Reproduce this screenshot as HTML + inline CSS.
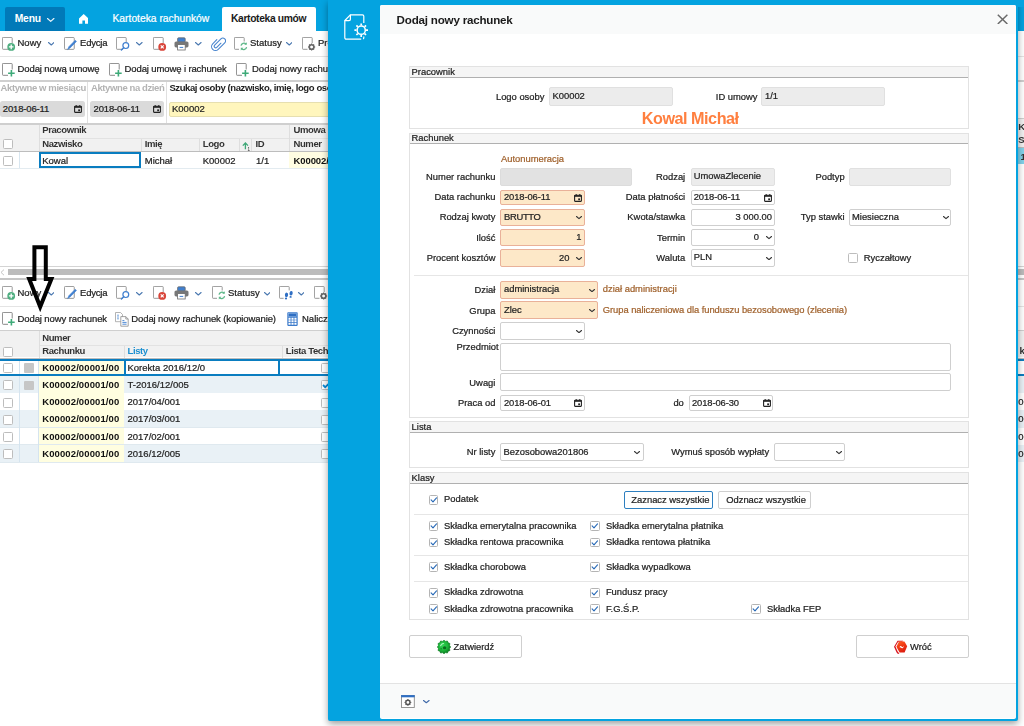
<!DOCTYPE html>
<html lang="pl"><head><meta charset="utf-8"><title>Dodaj nowy rachunek</title>
<style>
html,body{margin:0;padding:0;background:#fff;}
body{width:1024px;height:726px;position:relative;overflow:hidden;font-family:"Liberation Sans",sans-serif;}
.b{position:absolute;display:block;}
.t{position:absolute;white-space:nowrap;line-height:14px;-webkit-text-stroke:.22px currentColor;opacity:.999;}
#root{position:absolute;left:0;top:0;width:1024px;height:726px;overflow:hidden;opacity:.999;}
</style></head><body><div id="root">
<div class="b" style="left:0;top:0;width:1024px;height:31px;background:#04a3e0"></div>
<div class="b" style="left:4.5px;top:7px;width:60.5px;height:24px;background:#0079b8;border-radius:2px 2px 0 0;"></div>
<div class="t " style="left:14.7px;top:11.73px;font-size:10.3px;color:#fff;font-weight:700;-webkit-text-stroke:0;letter-spacing:-0.15px;">Menu</div>
<svg class="b" style="left:47.2px;top:17.6px" width="7.4" height="4.4" viewBox="0 0 7.4 4.4"><path d="M.5 .5L3.7 3.4L6.9 .5" fill="none" stroke="#e8f4fb" stroke-width="1.2" stroke-linecap="round" stroke-linejoin="round"/></svg>
<svg class="b" style="left:79px;top:14px" width="9.4" height="10" viewBox="0 0 9.4 10"><path d="M4.7 0L0 4.4V9.8H3.4V6.4H6V9.8H9.4V4.4z" fill="#fff"/></svg>
<div class="t " style="left:112.5px;top:11.73px;font-size:10.3px;color:#fff;">Kartoteka rachunków</div>
<div class="b" style="left:221.5px;top:7px;width:94.5px;height:24px;background:#fff;border-radius:2px 2px 0 0;"></div>
<div class="t " style="left:231px;top:11.73px;font-size:10.3px;color:#1a1a1a;font-weight:700;-webkit-text-stroke:0;letter-spacing:-0.36px;">Kartoteka umów</div>
<svg class="b" style="left:1.5px;top:37px" width="15" height="14" viewBox="0 0 15 14"><path d="M7 12.3H1.2a.8.8 0 0 1-.8-.8V1.2a.8.8 0 0 1 .8-.8h8.2a.8.8 0 0 1 .8.8V6" fill="#fff" stroke="#8c8c8c" stroke-width=".9"/><circle cx="9.2" cy="9.9" r="3.9" fill="#4fae80"/><path d="M9.2 7.6v4.6M6.9 9.9h4.6" stroke="#fff" stroke-width="1.3"/></svg>
<div class="t " style="left:17.5px;top:36.31px;font-size:9.5px;color:#222;">Nowy</div>
<svg class="b" style="left:47.8px;top:42.2px" width="6.6" height="4" viewBox="0 0 6.6 4"><path d="M.5 .5L3.3 3L6.1 .5" fill="none" stroke="#4a78b0" stroke-width="1.1" stroke-linecap="round" stroke-linejoin="round"/></svg>
<svg class="b" style="left:64px;top:37px" width="15" height="14" viewBox="0 0 15 14"><rect x=".45" y=".45" width="9.8" height="11.9" rx=".9" fill="#fff" stroke="#8c8c8c" stroke-width=".9"/><path d="M3.6 12.6l1.2-2.9L11.2 3.2l1.3 1.2L6.1 11z" fill="#3f7fcf" stroke="#3f7fcf" stroke-width=".5" stroke-linejoin="round"/></svg>
<div class="t " style="left:80px;top:36.31px;font-size:9.5px;color:#222;letter-spacing:-0.2px;">Edycja</div>
<svg class="b" style="left:116.2px;top:37px" width="15" height="14" viewBox="0 0 15 14"><path d="M7 12.3H1.2a.8.8 0 0 1-.8-.8V1.2a.8.8 0 0 1 .8-.8h8.2a.8.8 0 0 1 .8.8V5" fill="#fff" stroke="#8c8c8c" stroke-width=".9"/><circle cx="9.8" cy="8.6" r="2.9" fill="#fff" stroke="#3f7fcf" stroke-width="1.2"/><path d="M7.7 10.7L5.4 13" stroke="#3f7fcf" stroke-width="1.4" stroke-linecap="round"/></svg>
<svg class="b" style="left:136.2px;top:42.2px" width="6.6" height="4" viewBox="0 0 6.6 4"><path d="M.5 .5L3.3 3L6.1 .5" fill="none" stroke="#4a78b0" stroke-width="1.1" stroke-linecap="round" stroke-linejoin="round"/></svg>
<svg class="b" style="left:153px;top:37px" width="15" height="14" viewBox="0 0 15 14"><path d="M7 12.3H1.2a.8.8 0 0 1-.8-.8V1.2a.8.8 0 0 1 .8-.8h8.2a.8.8 0 0 1 .8.8V6" fill="#fff" stroke="#8c8c8c" stroke-width=".9"/><circle cx="9.2" cy="9.9" r="3.9" fill="#d8453a"/><path d="M7.7 8.4l3 3M10.7 8.4l-3 3" stroke="#fff" stroke-width="1.2"/></svg>
<svg class="b" style="left:173.6px;top:36.6px" width="15" height="14" viewBox="0 0 15 14"><rect x="3.6" y=".8" width="7.6" height="4.4" rx="1" fill="#3f7fcf" stroke="#6c6c6c" stroke-width=".8"/><rect x=".5" y="4.4" width="14" height="6" rx="1.6" fill="#777"/><rect x="3.6" y="7.6" width="7.6" height="5.4" fill="#fff" stroke="#6c6c6c" stroke-width=".8"/><path d="M5.6 10.4h3.6" stroke="#3f7fcf" stroke-width="1"/></svg>
<svg class="b" style="left:195.2px;top:42.2px" width="6.6" height="4" viewBox="0 0 6.6 4"><path d="M.5 .5L3.3 3L6.1 .5" fill="none" stroke="#4a78b0" stroke-width="1.1" stroke-linecap="round" stroke-linejoin="round"/></svg>
<svg class="b" style="left:210.5px;top:35.7px" width="15" height="15" viewBox="0 0 15 15"><g transform="rotate(45 7.5 7.5)"><path d="M8.6 6V11.8a1.5 1.5 0 0 1-3 0V3a2.7 2.7 0 0 1 5.400 0V12.200a3.900 3.900 0 0 1-7.800 0V6.400" fill="none" stroke="#4a86cf" stroke-width="1.1" stroke-linecap="round" transform="translate(.4,-.4)"/></g></svg>
<svg class="b" style="left:234px;top:37px" width="15" height="14" viewBox="0 0 15 14"><path d="M5 12.3H1.2a.8.8 0 0 1-.8-.8V1.2a.8.8 0 0 1 .8-.8h8.2a.8.8 0 0 1 .8.8V4.5" fill="#fff" stroke="#8c8c8c" stroke-width=".9"/><path d="M7 8.6a3 3 0 0 1 5-1.6M12.6 10.2a3 3 0 0 1-5 1.6" fill="none" stroke="#5fb88a" stroke-width="1.3"/><path d="M12.8 5.2v2.6h-2.6zM6.8 13.4v-2.6h2.6z" fill="#5fb88a"/></svg>
<div class="t " style="left:250px;top:36.31px;font-size:9.5px;color:#222;">Statusy</div>
<svg class="b" style="left:285.6px;top:42.2px" width="6.6" height="4" viewBox="0 0 6.6 4"><path d="M.5 .5L3.3 3L6.1 .5" fill="none" stroke="#4a78b0" stroke-width="1.1" stroke-linecap="round" stroke-linejoin="round"/></svg>
<svg class="b" style="left:302px;top:37px" width="15" height="14" viewBox="0 0 15 14"><path d="M5.5 12.3H1.2a.8.8 0 0 1-.8-.8V1.2a.8.8 0 0 1 .8-.8h8.2a.8.8 0 0 1 .8.8V6" fill="#fff" stroke="#8c8c8c" stroke-width=".9"/><circle cx="9.6" cy="10" r="2.3" fill="none" stroke="#666" stroke-width="1.6"/><path d="M9.6 6.4v1.2M9.6 12.4v1.2M6 10h1.2M12 10h1.2M7.1 7.5l.9.9M11.2 11.6l.9.9M12.1 7.5l-.9.9M8 11.6l-.9.9" stroke="#666" stroke-width="1.2"/></svg>
<div class="t " style="left:318px;top:36.31px;font-size:9.5px;color:#222;">Projekt</div>
<div class="b" style="left:0px;top:56px;width:330px;height:1px;background:#e4e4e4"></div>
<svg class="b" style="left:1.5px;top:62.5px" width="15" height="14" viewBox="0 0 15 14"><path d="M6 12.3H1.2a.8.8 0 0 1-.8-.8V1.2a.8.8 0 0 1 .8-.8h8.2a.8.8 0 0 1 .8.8V6.5" fill="#fff" stroke="#7a7a7a" stroke-width=".9"/><path d="M9.4 6.9v6.6M6.1 10.2h6.6" stroke="#3daa78" stroke-width="1.6"/></svg>
<div class="t " style="left:17.5px;top:62.21px;font-size:9.5px;color:#222;letter-spacing:-0.1px;">Dodaj nową umowę</div>
<svg class="b" style="left:108.5px;top:62.5px" width="15" height="14" viewBox="0 0 15 14"><path d="M6 12.3H1.2a.8.8 0 0 1-.8-.8V1.2a.8.8 0 0 1 .8-.8h8.2a.8.8 0 0 1 .8.8V6.5" fill="#fff" stroke="#7a7a7a" stroke-width=".9"/><path d="M9.4 6.9v6.6M6.1 10.2h6.6" stroke="#3daa78" stroke-width="1.6"/></svg>
<div class="t " style="left:124.6px;top:62.21px;font-size:9.5px;color:#222;letter-spacing:-0.12px;">Dodaj umowę i rachunek</div>
<svg class="b" style="left:236px;top:62.5px" width="15" height="14" viewBox="0 0 15 14"><path d="M6 12.3H1.2a.8.8 0 0 1-.8-.8V1.2a.8.8 0 0 1 .8-.8h8.2a.8.8 0 0 1 .8.8V6.5" fill="#fff" stroke="#7a7a7a" stroke-width=".9"/><path d="M9.4 6.9v6.6M6.1 10.2h6.6" stroke="#3daa78" stroke-width="1.6"/></svg>
<div class="t " style="left:252px;top:62.21px;font-size:9.5px;color:#222;">Dodaj nowy rachunek</div>
<div class="b" style="left:0px;top:80px;width:330px;height:2px;background:#cfcfcf"></div>
<div class="t " style="left:0.6px;top:80.81px;font-size:9.5px;color:#b3b3b3;font-weight:700;-webkit-text-stroke:0;letter-spacing:-0.4px;">Aktywne w miesiącu</div>
<div class="t " style="left:91px;top:80.81px;font-size:9.5px;color:#b3b3b3;font-weight:700;-webkit-text-stroke:0;letter-spacing:-0.4px;">Aktywne na dzień</div>
<div class="t " style="left:169.4px;top:80.81px;font-size:9.5px;color:#222;font-weight:700;-webkit-text-stroke:0;letter-spacing:-0.4px;">Szukaj osoby (nazwisko, imię, logo osoby)</div>
<div class="b" style="left:87.3px;top:82px;width:1px;height:41.5px;background:#e0e0e0"></div>
<div class="b" style="left:166px;top:82px;width:1px;height:41.5px;background:#e0e0e0"></div>
<div class="b" style="left:0px;top:101px;width:85.4px;height:15.7px;background:#dadada;border-radius:2.5px;"></div>
<div class="t " style="left:2.75px;top:102.11px;font-size:9.5px;color:#222;letter-spacing:-0.15px;">2018-06-11</div>
<svg class="b" style="left:74.4px;top:105px" width="8" height="8" viewBox="0 0 8 8"><rect x=".6" y="1.2" width="6.8" height="6.2" rx=".6" fill="none" stroke="#222" stroke-width="1.1"/><rect x=".6" y="1.2" width="6.8" height="1.6" fill="#222"/><path d="M2.2 0v1.6M5.8 0v1.6" stroke="#222" stroke-width="1"/><rect x="4.2" y="4.4" width="1.8" height="1.8" fill="#222"/></svg>
<div class="b" style="left:90.3px;top:101px;width:73.4px;height:15.7px;background:#dadada;border-radius:2.5px;"></div>
<div class="t " style="left:93.5px;top:102.11px;font-size:9.5px;color:#222;letter-spacing:-0.15px;">2018-06-11</div>
<svg class="b" style="left:153px;top:105px" width="8" height="8" viewBox="0 0 8 8"><rect x=".6" y="1.2" width="6.8" height="6.2" rx=".6" fill="none" stroke="#222" stroke-width="1.1"/><rect x=".6" y="1.2" width="6.8" height="1.6" fill="#222"/><path d="M2.2 0v1.6M5.8 0v1.6" stroke="#222" stroke-width="1"/><rect x="4.2" y="4.4" width="1.8" height="1.8" fill="#222"/></svg>
<div class="b" style="left:168.5px;top:101.5px;width:170px;height:15px;background:#fff6bd;border-radius:2px;border:1px solid #e6dfb0;box-sizing:border-box"></div>
<div class="t " style="left:172px;top:102.11px;font-size:9.5px;color:#222;">K00002</div>
<div class="b" style="left:0px;top:123px;width:330px;height:2px;background:#cfcfcf"></div>
<div class="b" style="left:0px;top:125px;width:330px;height:26px;background:#f1f1f1"></div>
<div class="b" style="left:38.7px;top:138px;width:250.7px;height:1px;background:#e2e2e2"></div>
<div class="b" style="left:289.4px;top:138px;width:45px;height:1px;background:#e2e2e2"></div>
<div class="b" style="left:38.7px;top:125px;width:1px;height:26px;background:#dedede"></div>
<div class="b" style="left:140.6px;top:139px;width:1px;height:12px;background:#dedede"></div>
<div class="b" style="left:198.7px;top:139px;width:1px;height:12px;background:#dedede"></div>
<div class="b" style="left:238.5px;top:139px;width:1px;height:12px;background:#dedede"></div>
<div class="b" style="left:251px;top:139px;width:1px;height:12px;background:#dedede"></div>
<div class="b" style="left:289.4px;top:125px;width:1px;height:26px;background:#dedede"></div>
<div class="t " style="left:42.25px;top:123.31px;font-size:9.5px;color:#333;font-weight:700;-webkit-text-stroke:0;letter-spacing:-0.4px;">Pracownik</div>
<div class="t " style="left:293.5px;top:123.31px;font-size:9.5px;color:#333;font-weight:700;-webkit-text-stroke:0;letter-spacing:-0.4px;">Umowa</div>
<div class="t " style="left:42.25px;top:137.11px;font-size:9.5px;color:#333;font-weight:700;-webkit-text-stroke:0;letter-spacing:-0.4px;">Nazwisko</div>
<div class="t " style="left:144.75px;top:137.11px;font-size:9.5px;color:#333;font-weight:700;-webkit-text-stroke:0;letter-spacing:-0.4px;">Imię</div>
<div class="t " style="left:202.75px;top:137.11px;font-size:9.5px;color:#333;font-weight:700;-webkit-text-stroke:0;letter-spacing:-0.4px;">Logo</div>
<div class="t " style="left:255.6px;top:137.11px;font-size:9.5px;color:#333;font-weight:700;-webkit-text-stroke:0;letter-spacing:-0.4px;">ID</div>
<div class="t " style="left:293.5px;top:137.11px;font-size:9.5px;color:#333;font-weight:700;-webkit-text-stroke:0;letter-spacing:-0.4px;">Numer</div>
<svg class="b" style="left:241.6px;top:141.5px" width="8" height="9" viewBox="0 0 8 9"><path d="M3.4 7.2V1.2M.8 3.6L3.4 1l2.6 2.6" fill="none" stroke="#3fa878" stroke-width="1.3"/><text x="5.6" y="9" font-size="4.5" font-family="Liberation Sans, sans-serif" fill="#333">1</text></svg>
<div class="b" style="left:2.5px;top:139.3px;width:10px;height:10px;background:#fff;border:1px solid #bdbdbd;border-radius:1.5px;box-sizing:border-box;"></div>
<div class="b" style="left:0px;top:151px;width:330px;height:1.4px;background:#bdbdbd"></div>
<div class="b" style="left:0px;top:152.4px;width:330px;height:15.6px;background:#fff"></div>
<div class="b" style="left:289.4px;top:152.4px;width:45px;height:15.6px;background:#fffde2"></div>
<div class="b" style="left:0px;top:168px;width:330px;height:1px;background:#e3ebf0"></div>
<div class="b" style="left:19.3px;top:152.4px;width:1px;height:15.6px;background:#d8e6f0"></div>
<div class="b" style="left:2.5px;top:155.8px;width:10px;height:10px;background:#fff;border:1px solid #bdbdbd;border-radius:1.5px;box-sizing:border-box;"></div>
<div class="b" style="left:38.7px;top:152.2px;width:102px;height:16px;border:2px solid #0a7dc0;box-sizing:border-box;background:#fff"></div>
<div class="t " style="left:42.25px;top:153.71px;font-size:9.5px;color:#222;">Kowal</div>
<div class="t " style="left:144.75px;top:153.71px;font-size:9.5px;color:#222;">Michał</div>
<div class="t " style="left:202.75px;top:153.71px;font-size:9.5px;color:#222;">K00002</div>
<div class="t " style="left:256px;top:153.71px;font-size:9.5px;color:#222;">1/1</div>
<div class="t " style="left:293.5px;top:153.71px;font-size:9.5px;color:#111;font-weight:700;-webkit-text-stroke:0;letter-spacing:-0.1px;">K00002/00001</div>
<div class="b" style="left:0px;top:266px;width:330px;height:1px;background:#d4d4d4"></div>
<div class="b" style="left:8px;top:269.4px;width:330px;height:5.8px;background:#bcbcbc"></div>
<svg class="b" style="left:0.3px;top:269px" width="5" height="7" viewBox="0 0 5 7"><path d="M4 .6L1 3.4L4 6.2" fill="none" stroke="#c4c4c4" stroke-width="1"/></svg>
<div class="b" style="left:0px;top:278px;width:330px;height:2px;background:#c6c6c6"></div>
<svg class="b" style="left:1.5px;top:286.4px" width="15" height="14" viewBox="0 0 15 14"><path d="M7 12.3H1.2a.8.8 0 0 1-.8-.8V1.2a.8.8 0 0 1 .8-.8h8.2a.8.8 0 0 1 .8.8V6" fill="#fff" stroke="#8c8c8c" stroke-width=".9"/><circle cx="9.2" cy="9.9" r="3.9" fill="#4fae80"/><path d="M9.2 7.6v4.6M6.9 9.9h4.6" stroke="#fff" stroke-width="1.3"/></svg>
<div class="t " style="left:17.5px;top:285.71px;font-size:9.5px;color:#222;">Nowy</div>
<svg class="b" style="left:47.8px;top:291.59999999999997px" width="6.6" height="4" viewBox="0 0 6.6 4"><path d="M.5 .5L3.3 3L6.1 .5" fill="none" stroke="#4a78b0" stroke-width="1.1" stroke-linecap="round" stroke-linejoin="round"/></svg>
<svg class="b" style="left:64px;top:286.4px" width="15" height="14" viewBox="0 0 15 14"><rect x=".45" y=".45" width="9.8" height="11.9" rx=".9" fill="#fff" stroke="#8c8c8c" stroke-width=".9"/><path d="M3.6 12.6l1.2-2.9L11.2 3.2l1.3 1.2L6.1 11z" fill="#3f7fcf" stroke="#3f7fcf" stroke-width=".5" stroke-linejoin="round"/></svg>
<div class="t " style="left:80px;top:285.71px;font-size:9.5px;color:#222;letter-spacing:-0.2px;">Edycja</div>
<svg class="b" style="left:116.2px;top:286.4px" width="15" height="14" viewBox="0 0 15 14"><path d="M7 12.3H1.2a.8.8 0 0 1-.8-.8V1.2a.8.8 0 0 1 .8-.8h8.2a.8.8 0 0 1 .8.8V5" fill="#fff" stroke="#8c8c8c" stroke-width=".9"/><circle cx="9.8" cy="8.6" r="2.9" fill="#fff" stroke="#3f7fcf" stroke-width="1.2"/><path d="M7.7 10.7L5.4 13" stroke="#3f7fcf" stroke-width="1.4" stroke-linecap="round"/></svg>
<svg class="b" style="left:136.2px;top:291.59999999999997px" width="6.6" height="4" viewBox="0 0 6.6 4"><path d="M.5 .5L3.3 3L6.1 .5" fill="none" stroke="#4a78b0" stroke-width="1.1" stroke-linecap="round" stroke-linejoin="round"/></svg>
<svg class="b" style="left:153px;top:286.4px" width="15" height="14" viewBox="0 0 15 14"><path d="M7 12.3H1.2a.8.8 0 0 1-.8-.8V1.2a.8.8 0 0 1 .8-.8h8.2a.8.8 0 0 1 .8.8V6" fill="#fff" stroke="#8c8c8c" stroke-width=".9"/><circle cx="9.2" cy="9.9" r="3.9" fill="#d8453a"/><path d="M7.7 8.4l3 3M10.7 8.4l-3 3" stroke="#fff" stroke-width="1.2"/></svg>
<svg class="b" style="left:173.6px;top:286.0px" width="15" height="14" viewBox="0 0 15 14"><rect x="3.6" y=".8" width="7.6" height="4.4" rx="1" fill="#3f7fcf" stroke="#6c6c6c" stroke-width=".8"/><rect x=".5" y="4.4" width="14" height="6" rx="1.6" fill="#777"/><rect x="3.6" y="7.6" width="7.6" height="5.4" fill="#fff" stroke="#6c6c6c" stroke-width=".8"/><path d="M5.6 10.4h3.6" stroke="#3f7fcf" stroke-width="1"/></svg>
<svg class="b" style="left:195.2px;top:291.59999999999997px" width="6.6" height="4" viewBox="0 0 6.6 4"><path d="M.5 .5L3.3 3L6.1 .5" fill="none" stroke="#4a78b0" stroke-width="1.1" stroke-linecap="round" stroke-linejoin="round"/></svg>
<svg class="b" style="left:212px;top:286.4px" width="15" height="14" viewBox="0 0 15 14"><path d="M5 12.3H1.2a.8.8 0 0 1-.8-.8V1.2a.8.8 0 0 1 .8-.8h8.2a.8.8 0 0 1 .8.8V4.5" fill="#fff" stroke="#8c8c8c" stroke-width=".9"/><path d="M7 8.6a3 3 0 0 1 5-1.6M12.6 10.2a3 3 0 0 1-5 1.6" fill="none" stroke="#5fb88a" stroke-width="1.3"/><path d="M12.8 5.2v2.6h-2.6zM6.8 13.4v-2.6h2.6z" fill="#5fb88a"/></svg>
<div class="t " style="left:228px;top:285.71px;font-size:9.5px;color:#222;">Statusy</div>
<svg class="b" style="left:263.6px;top:291.6px" width="6.6" height="4" viewBox="0 0 6.6 4"><path d="M.5 .5L3.3 3L6.1 .5" fill="none" stroke="#4a78b0" stroke-width="1.1" stroke-linecap="round" stroke-linejoin="round"/></svg>
<svg class="b" style="left:279.4px;top:286.4px" width="15" height="14" viewBox="0 0 15 14"><path d="M4.6 12.3H1.2a.8.8 0 0 1-.8-.8V1.2a.8.8 0 0 1 .8-.8h8.2a.8.8 0 0 1 .8.8V4.4" fill="#fff" stroke="#8c8c8c" stroke-width=".9"/><ellipse cx="7.5" cy="8.9" rx="1.6" ry="2.3" fill="#2f6fc4" transform="rotate(10 7.5 8.9)"/><ellipse cx="7" cy="12.5" rx="1.1" ry=".9" fill="#2f6fc4"/><ellipse cx="12.1" cy="7.3" rx="1.6" ry="2.3" fill="#2f6fc4" transform="rotate(10 12.1 7.3)"/><ellipse cx="11.6" cy="10.9" rx="1.1" ry=".9" fill="#2f6fc4"/></svg>
<svg class="b" style="left:297.6px;top:291.6px" width="6.6" height="4" viewBox="0 0 6.6 4"><path d="M.5 .5L3.3 3L6.1 .5" fill="none" stroke="#4a78b0" stroke-width="1.1" stroke-linecap="round" stroke-linejoin="round"/></svg>
<svg class="b" style="left:314px;top:286.4px" width="15" height="14" viewBox="0 0 15 14"><path d="M5.5 12.3H1.2a.8.8 0 0 1-.8-.8V1.2a.8.8 0 0 1 .8-.8h8.2a.8.8 0 0 1 .8.8V6" fill="#fff" stroke="#8c8c8c" stroke-width=".9"/><circle cx="9.6" cy="10" r="2.3" fill="none" stroke="#666" stroke-width="1.6"/><path d="M9.6 6.4v1.2M9.6 12.4v1.2M6 10h1.2M12 10h1.2M7.1 7.5l.9.9M11.2 11.6l.9.9M12.1 7.5l-.9.9M8 11.6l-.9.9" stroke="#666" stroke-width="1.2"/></svg>
<div class="b" style="left:0px;top:306px;width:330px;height:1px;background:#e4e4e4"></div>
<svg class="b" style="left:1.5px;top:312px" width="15" height="14" viewBox="0 0 15 14"><path d="M6 12.3H1.2a.8.8 0 0 1-.8-.8V1.2a.8.8 0 0 1 .8-.8h8.2a.8.8 0 0 1 .8.8V6.5" fill="#fff" stroke="#7a7a7a" stroke-width=".9"/><path d="M9.4 6.9v6.6M6.1 10.2h6.6" stroke="#3daa78" stroke-width="1.6"/></svg>
<div class="t " style="left:17.5px;top:311.71px;font-size:9.5px;color:#222;letter-spacing:-0.1px;">Dodaj nowy rachunek</div>
<svg class="b" style="left:114.8px;top:311.6px" width="15" height="15" viewBox="0 0 15 15"><path d="M.5.5h5l2 2v7.2h-7z" fill="#fff" stroke="#a0a0a0" stroke-width=".8"/><path d="M2 3.2h2M2 5h2M2 6.8h2" stroke="#5b93d6" stroke-width=".8"/><path d="M5.8 4.6h5l2.4 2.4v7.2H5.8z" fill="#fff" stroke="#8a8a8a" stroke-width=".8"/><path d="M10.8 4.6v2.4h2.4" fill="none" stroke="#8a8a8a" stroke-width=".8"/><path d="M7.4 8.6h2M7.4 10.4h4.2M7.4 12.2h4.2" stroke="#3f7fcf" stroke-width=".9"/></svg>
<div class="t " style="left:131.25px;top:311.71px;font-size:9.5px;color:#222;letter-spacing:-0.1px;">Dodaj nowy rachunek (kopiowanie)</div>
<svg class="b" style="left:287px;top:312px" width="12" height="15" viewBox="0 0 12 15"><rect x=".3" y=".3" width="10.4" height="13.6" rx=".8" fill="#3c7bcb"/><rect x="1.5" y="1.5" width="8" height="2.8" fill="#2f6ec2" stroke="#9dbfe8" stroke-width=".5"/><path d="M1.500 6.700h2.100M4.450 6.700h2.100M7.400 6.700h2.100M1.500 9.300h2.100M4.450 9.300h2.100M7.400 9.300h2.100M1.500 11.900h2.100M4.450 11.900h2.100M7.400 11.900h2.100" stroke="#fff" stroke-width="1.900"/></svg>
<div class="t " style="left:302px;top:311.71px;font-size:9.5px;color:#222;">Nalicz</div>
<div class="b" style="left:0px;top:330px;width:330px;height:1.3px;background:#cfcfcf"></div>
<div class="b" style="left:0px;top:331.3px;width:330px;height:26.2px;background:#f1f1f1"></div>
<div class="b" style="left:38.7px;top:345px;width:300px;height:1px;background:#e2e2e2"></div>
<div class="b" style="left:38.7px;top:331px;width:1px;height:26.5px;background:#dedede"></div>
<div class="b" style="left:123.7px;top:346px;width:1px;height:11.5px;background:#dedede"></div>
<div class="b" style="left:281.6px;top:346px;width:1px;height:11.5px;background:#dedede"></div>
<div class="t " style="left:42.25px;top:330.71px;font-size:9.5px;color:#333;font-weight:700;-webkit-text-stroke:0;letter-spacing:-0.4px;">Numer</div>
<div class="t " style="left:42.25px;top:344.46px;font-size:9.5px;color:#333;font-weight:700;-webkit-text-stroke:0;letter-spacing:-0.4px;">Rachunku</div>
<div class="t " style="left:127.5px;top:344.46px;font-size:9.5px;color:#1b8fd0;font-weight:700;-webkit-text-stroke:0;letter-spacing:-0.4px;">Listy</div>
<div class="t " style="left:285.8px;top:344.46px;font-size:9.5px;color:#333;font-weight:700;-webkit-text-stroke:0;letter-spacing:-0.4px;">Lista Tech</div>
<div class="b" style="left:2.5px;top:346.5px;width:10px;height:10px;background:#fff;border:1px solid #bdbdbd;border-radius:1.5px;box-sizing:border-box;"></div>
<div class="b" style="left:0px;top:357.5px;width:330px;height:1.3px;background:#bdbdbd"></div>
<div class="b" style="left:0px;top:358.8px;width:330px;height:17.2px;background:#fff"></div>
<div class="b" style="left:38.7px;top:358.8px;width:85px;height:17.2px;background:#fffee0"></div>
<div class="b" style="left:0px;top:375.5px;width:330px;height:1px;background:#dfe9ef"></div>
<div class="b" style="left:19.3px;top:358.8px;width:1px;height:17.2px;background:#d5e4ef"></div>
<div class="b" style="left:38.2px;top:358.8px;width:1px;height:17.2px;background:#d5e4ef"></div>
<div class="b" style="left:2.5px;top:363.1px;width:10px;height:10px;background:#fff;border:1px solid #bdbdbd;border-radius:1.5px;box-sizing:border-box;"></div>
<div class="b" style="left:24px;top:363.40000000000003px;width:10px;height:9.4px;background:#c6c6c6;border-radius:1px"></div>
<div class="t " style="left:42.25px;top:360.71px;font-size:9.5px;color:#111;font-weight:700;-webkit-text-stroke:0;letter-spacing:0.1px;width:78.6px;overflow:hidden;">K00002/00001/00</div>
<div class="t " style="left:127.5px;top:360.71px;font-size:9.5px;color:#222;">Korekta 2016/12/0</div>
<div class="b" style="left:320.8px;top:363.1px;width:10px;height:10px;background:#fff;border:1px solid #bdbdbd;border-radius:1.5px;box-sizing:border-box;"></div>
<div class="b" style="left:0px;top:376.0px;width:330px;height:17.2px;background:#e9f1f6"></div>
<div class="b" style="left:38.7px;top:376.0px;width:85px;height:17.2px;background:#fffee0"></div>
<div class="b" style="left:0px;top:392.7px;width:330px;height:1px;background:#dfe9ef"></div>
<div class="b" style="left:19.3px;top:376.0px;width:1px;height:17.2px;background:#d5e4ef"></div>
<div class="b" style="left:38.2px;top:376.0px;width:1px;height:17.2px;background:#d5e4ef"></div>
<div class="b" style="left:2.5px;top:380.3px;width:10px;height:10px;background:#fff;border:1px solid #bdbdbd;border-radius:1.5px;box-sizing:border-box;"></div>
<div class="b" style="left:24px;top:380.6px;width:10px;height:9.4px;background:#c6c6c6;border-radius:1px"></div>
<div class="t " style="left:42.25px;top:377.91px;font-size:9.5px;color:#111;font-weight:700;-webkit-text-stroke:0;letter-spacing:0.1px;width:78.6px;overflow:hidden;">K00002/00001/00</div>
<div class="t " style="left:127.5px;top:377.91px;font-size:9.5px;color:#222;">T-2016/12/005</div>
<div class="b" style="left:320.8px;top:380.3px;width:10px;height:10px;background:#fff;border:1px solid #bdbdbd;border-radius:1.5px;box-sizing:border-box;"></div>
<svg class="b" style="left:320.8px;top:380.3px" width="10" height="10" viewBox="0 0 10 10"><path d="M2 5l2.2 2.2L9 2.6" fill="none" stroke="#0a8ad6" stroke-width="1.8"/></svg>
<div class="b" style="left:0px;top:393.2px;width:330px;height:17.2px;background:#fff"></div>
<div class="b" style="left:38.7px;top:393.2px;width:85px;height:17.2px;background:#fffee0"></div>
<div class="b" style="left:0px;top:409.9px;width:330px;height:1px;background:#dfe9ef"></div>
<div class="b" style="left:19.3px;top:393.2px;width:1px;height:17.2px;background:#d5e4ef"></div>
<div class="b" style="left:38.2px;top:393.2px;width:1px;height:17.2px;background:#d5e4ef"></div>
<div class="b" style="left:2.5px;top:397.5px;width:10px;height:10px;background:#fff;border:1px solid #bdbdbd;border-radius:1.5px;box-sizing:border-box;"></div>
<div class="t " style="left:42.25px;top:395.11px;font-size:9.5px;color:#111;font-weight:700;-webkit-text-stroke:0;letter-spacing:0.1px;width:78.6px;overflow:hidden;">K00002/00001/00</div>
<div class="t " style="left:127.5px;top:395.11px;font-size:9.5px;color:#222;">2017/04/001</div>
<div class="b" style="left:320.8px;top:397.5px;width:10px;height:10px;background:#fff;border:1px solid #bdbdbd;border-radius:1.5px;box-sizing:border-box;"></div>
<div class="b" style="left:0px;top:410.4px;width:330px;height:17.2px;background:#e9f1f6"></div>
<div class="b" style="left:38.7px;top:410.4px;width:85px;height:17.2px;background:#fffee0"></div>
<div class="b" style="left:0px;top:427.09999999999997px;width:330px;height:1px;background:#dfe9ef"></div>
<div class="b" style="left:19.3px;top:410.4px;width:1px;height:17.2px;background:#d5e4ef"></div>
<div class="b" style="left:38.2px;top:410.4px;width:1px;height:17.2px;background:#d5e4ef"></div>
<div class="b" style="left:2.5px;top:414.7px;width:10px;height:10px;background:#fff;border:1px solid #bdbdbd;border-radius:1.5px;box-sizing:border-box;"></div>
<div class="t " style="left:42.25px;top:412.31px;font-size:9.5px;color:#111;font-weight:700;-webkit-text-stroke:0;letter-spacing:0.1px;width:78.6px;overflow:hidden;">K00002/00001/00</div>
<div class="t " style="left:127.5px;top:412.31px;font-size:9.5px;color:#222;">2017/03/001</div>
<div class="b" style="left:320.8px;top:414.7px;width:10px;height:10px;background:#fff;border:1px solid #bdbdbd;border-radius:1.5px;box-sizing:border-box;"></div>
<div class="b" style="left:0px;top:427.6px;width:330px;height:17.2px;background:#fff"></div>
<div class="b" style="left:38.7px;top:427.6px;width:85px;height:17.2px;background:#fffee0"></div>
<div class="b" style="left:0px;top:444.3px;width:330px;height:1px;background:#dfe9ef"></div>
<div class="b" style="left:19.3px;top:427.6px;width:1px;height:17.2px;background:#d5e4ef"></div>
<div class="b" style="left:38.2px;top:427.6px;width:1px;height:17.2px;background:#d5e4ef"></div>
<div class="b" style="left:2.5px;top:431.90000000000003px;width:10px;height:10px;background:#fff;border:1px solid #bdbdbd;border-radius:1.5px;box-sizing:border-box;"></div>
<div class="t " style="left:42.25px;top:429.51px;font-size:9.5px;color:#111;font-weight:700;-webkit-text-stroke:0;letter-spacing:0.1px;width:78.6px;overflow:hidden;">K00002/00001/00</div>
<div class="t " style="left:127.5px;top:429.51px;font-size:9.5px;color:#222;">2017/02/001</div>
<div class="b" style="left:320.8px;top:431.90000000000003px;width:10px;height:10px;background:#fff;border:1px solid #bdbdbd;border-radius:1.5px;box-sizing:border-box;"></div>
<div class="b" style="left:0px;top:444.8px;width:330px;height:17.2px;background:#e9f1f6"></div>
<div class="b" style="left:38.7px;top:444.8px;width:85px;height:17.2px;background:#fffee0"></div>
<div class="b" style="left:0px;top:461.5px;width:330px;height:1px;background:#dfe9ef"></div>
<div class="b" style="left:19.3px;top:444.8px;width:1px;height:17.2px;background:#d5e4ef"></div>
<div class="b" style="left:38.2px;top:444.8px;width:1px;height:17.2px;background:#d5e4ef"></div>
<div class="b" style="left:2.5px;top:449.1px;width:10px;height:10px;background:#fff;border:1px solid #bdbdbd;border-radius:1.5px;box-sizing:border-box;"></div>
<div class="t " style="left:42.25px;top:446.71px;font-size:9.5px;color:#111;font-weight:700;-webkit-text-stroke:0;letter-spacing:0.1px;width:78.6px;overflow:hidden;">K00002/00001/00</div>
<div class="t " style="left:127.5px;top:446.71px;font-size:9.5px;color:#222;">2016/12/005</div>
<div class="b" style="left:320.8px;top:449.1px;width:10px;height:10px;background:#fff;border:1px solid #bdbdbd;border-radius:1.5px;box-sizing:border-box;"></div>
<div class="b" style="left:0px;top:358.7px;width:330px;height:2px;background:#0a7dc0"></div>
<div class="b" style="left:0px;top:374.4px;width:330px;height:2px;background:#0a7dc0"></div>
<div class="b" style="left:124.2px;top:358.7px;width:156px;height:17.7px;border:2px solid #0a7dc0;box-sizing:border-box;background:#fff"></div>
<div class="t " style="left:127.5px;top:360.71px;font-size:9.5px;color:#222;">Korekta 2016/12/0</div>
<svg class="b" style="left:22px;top:242px" width="40" height="74" viewBox="0 0 40 74"><path d="M12.4 5.2H23.8V37H29.4L18.200 64.800L7.200 37H12.400z" fill="#fff" fill-opacity="0" stroke="#000" stroke-width="4" stroke-linejoin="miter"/></svg>
<div class="b" style="left:1018px;top:31px;width:6px;height:700px;background:#fff"></div>
<div class="b" style="left:1018px;top:56px;width:6px;height:1px;background:#e4e4e4"></div>
<div class="b" style="left:1018px;top:80px;width:6px;height:2px;background:#cfcfcf"></div>
<div class="b" style="left:1018px;top:117.5px;width:6px;height:1.5px;background:#cfcfcf"></div>
<div class="b" style="left:1018px;top:119px;width:6px;height:28px;background:#f1f1f1"></div>
<div class="b" style="left:1018px;top:147px;width:6px;height:1.4px;background:#bdbdbd"></div>
<div class="b" style="left:1018px;top:148.4px;width:6px;height:15.6px;background:#82d2ea"></div>
<div class="t " style="left:1018.3px;top:119.51px;font-size:9.5px;color:#333;font-weight:700;-webkit-text-stroke:0;">Kw</div>
<div class="t " style="left:1018.3px;top:133.31px;font-size:9.5px;color:#333;font-weight:700;-webkit-text-stroke:0;">St</div>
<div class="t " style="left:1020.5px;top:149.71px;font-size:9.5px;color:#333;font-weight:700;-webkit-text-stroke:0;">1</div>
<div class="b" style="left:1018px;top:266px;width:6px;height:1px;background:#d4d4d4"></div>
<div class="b" style="left:1018px;top:269.4px;width:6px;height:5.8px;background:#bcbcbc"></div>
<div class="b" style="left:1018px;top:278px;width:6px;height:2px;background:#c6c6c6"></div>
<div class="b" style="left:1018px;top:306px;width:6px;height:1px;background:#e4e4e4"></div>
<div class="b" style="left:1018px;top:330px;width:6px;height:1.3px;background:#cfcfcf"></div>
<div class="b" style="left:1018px;top:331.3px;width:6px;height:26.2px;background:#f1f1f1"></div>
<div class="t " style="left:1019.5px;top:344.46px;font-size:9.5px;color:#333;font-weight:700;-webkit-text-stroke:0;">k</div>
<div class="b" style="left:1018px;top:357.5px;width:6px;height:1.3px;background:#bdbdbd"></div>
<div class="b" style="left:1018px;top:358.8px;width:6px;height:17.2px;background:#fff"></div>
<div class="b" style="left:1018px;top:376.0px;width:6px;height:17.2px;background:#e9f1f6"></div>
<div class="b" style="left:1018px;top:393.2px;width:6px;height:17.2px;background:#fff"></div>
<div class="t " style="left:1018.2px;top:395.11px;font-size:9.5px;color:#222;">0</div>
<div class="b" style="left:1018px;top:410.4px;width:6px;height:17.2px;background:#e9f1f6"></div>
<div class="t " style="left:1018.2px;top:412.31px;font-size:9.5px;color:#222;">0</div>
<div class="b" style="left:1018px;top:427.6px;width:6px;height:17.2px;background:#fff"></div>
<div class="t " style="left:1018.2px;top:429.51px;font-size:9.5px;color:#222;">0</div>
<div class="b" style="left:1018px;top:444.8px;width:6px;height:17.2px;background:#e9f1f6"></div>
<div class="t " style="left:1018.2px;top:446.71px;font-size:9.5px;color:#222;">0</div>
<div class="b" style="left:1018px;top:358.7px;width:6px;height:2px;background:#0a7dc0"></div>
<div class="b" style="left:1018px;top:374.4px;width:6px;height:2px;background:#0a7dc0"></div>
<div class="b" style="left:328px;top:0;width:690px;height:720.6px;background:#04a3e0;border-radius:0 0 2px 2px;box-shadow:0 3px 7px rgba(0,0,0,.38)"></div>
<div class="b" style="left:328px;top:0;width:696px;height:7px;background:#04a3e0"></div>
<div class="b" style="left:380px;top:5px;width:636px;height:713.5px;background:#fff;border-radius:2px"></div>
<div class="b" style="left:380px;top:5px;width:636px;height:29px;background:#f9fafa;border-radius:2px 2px 0 0"></div>
<div class="b" style="left:380px;top:683.4px;width:636px;height:35px;background:#f9fafa;border-top:1px solid #e3e3e3;border-radius:0 0 2px 2px;box-sizing:border-box"></div>
<svg class="b" style="left:344px;top:14px" width="24" height="27" viewBox="0 0 24 27"><path d="M17.2 25.2H2.2a1.4 1.4 0 0 1-1.4-1.4V6.6L6.4.8H18.4a1.4 1.4 0 0 1 1.4 1.4V9" fill="none" stroke="#fff" stroke-width="1.2"/><path d="M.8 6.6H5a1.4 1.4 0 0 0 1.4-1.4V.8" fill="none" stroke="#fff" stroke-width="1.2"/><path d="M19.8 22.6v1.2a1.4 1.4 0 0 1-.6 1.1" fill="none" stroke="#fff" stroke-width="1.2"/><circle cx="17.2" cy="16.2" r="4.1" fill="none" stroke="#fff" stroke-width="1.5"/><path d="M17.2 9.4v2M17.2 21v2M10.4 16.2h2M22 16.2h2M12.4 11.4l1.4 1.4M20.6 19.6l1.4 1.4M22 11.4l-1.4 1.4M13.8 19.6l-1.4 1.4" stroke="#fff" stroke-width="1.7"/></svg>
<div class="t " style="left:396.6px;top:12.78px;font-size:11.6px;color:#1a1a1a;font-weight:700;-webkit-text-stroke:0;letter-spacing:-0.2px;">Dodaj nowy rachunek</div>
<svg class="b" style="left:997px;top:13.6px" width="11.4" height="10.8" viewBox="0 0 11.4 10.8"><path d="M.8.8l9.6 9.2M10.4.8L.8 10" stroke="#6a6a6a" stroke-width="1.5"/></svg>
<div class="b" style="left:408.5px;top:66px;width:560.7px;height:62.80000000000001px;border:1px solid #e2e2e2;box-sizing:border-box;background:#fff"></div>
<div class="b" style="left:409.5px;top:67px;width:558.7px;height:9.6px;background:#f5f5f5;border-bottom:1px solid #b0b0b0"></div>
<div class="t " style="left:411.6px;top:64.74px;font-size:9.4px;color:#222;">Pracownik</div>
<div class="t " style="right:479.6px;top:89.94px;font-size:9.4px;color:#222;text-align:right;">Logo osoby</div>
<div class="b" style="left:549px;top:87px;width:123.6px;height:18.6px;background:#ececec;border:1px solid #e0e0e0;border-radius:2px;box-sizing:border-box"></div>
<div class="t " style="left:552.5px;top:88.74px;font-size:9.4px;color:#222;">K00002</div>
<div class="t " style="right:266.5px;top:89.94px;font-size:9.4px;color:#222;text-align:right;">ID umowy</div>
<div class="b" style="left:761.4px;top:87px;width:124px;height:18.6px;background:#ececec;border:1px solid #e0e0e0;border-radius:2px;box-sizing:border-box"></div>
<div class="t " style="left:765px;top:88.74px;font-size:9.4px;color:#222;">1/1</div>
<div class="t " style="left:641.8px;top:111.19px;font-size:16.2px;color:#ff7f3f;font-weight:700;-webkit-text-stroke:0;letter-spacing:-0.48px;">Kowal Michał</div>
<div class="b" style="left:408.5px;top:132.5px;width:560.7px;height:285.0px;border:1px solid #e2e2e2;box-sizing:border-box;background:#fff"></div>
<div class="b" style="left:409.5px;top:133.5px;width:558.7px;height:9.6px;background:#f5f5f5;border-bottom:1px solid #b0b0b0"></div>
<div class="t " style="left:411.6px;top:131.24px;font-size:9.4px;color:#222;">Rachunek</div>
<div class="t " style="left:501px;top:151.94px;font-size:9.4px;color:#a0622d;">Autonumeracja</div>
<div class="t " style="right:528.6px;top:169.74px;font-size:9.4px;color:#222;text-align:right;">Numer rachunku</div>
<div class="b" style="left:500.2px;top:168px;width:131.8px;height:18px;background:#e2e2e2;border:1px solid #dcdcdc;border-radius:2px;box-sizing:border-box"></div>
<div class="t " style="right:528.6px;top:190.34px;font-size:9.4px;color:#222;text-align:right;">Data rachunku</div>
<div class="b" style="left:500.2px;top:190.2px;width:85px;height:15.2px;background:#fde8c8;border:1px solid #e9b199;border-radius:2px;box-sizing:border-box"></div>
<div class="t " style="left:504px;top:190.34px;font-size:9.4px;color:#222;letter-spacing:-0.1px;">2018-06-11</div>
<svg class="b" style="left:574px;top:194.2px" width="8" height="8" viewBox="0 0 8 8"><rect x=".6" y="1.2" width="6.8" height="6.2" rx=".6" fill="none" stroke="#222" stroke-width="1.1"/><rect x=".6" y="1.2" width="6.8" height="1.6" fill="#222"/><path d="M2.2 0v1.6M5.8 0v1.6" stroke="#222" stroke-width="1"/><rect x="4.2" y="4.4" width="1.8" height="1.8" fill="#222"/></svg>
<div class="t " style="right:528.6px;top:210.34px;font-size:9.4px;color:#222;text-align:right;">Rodzaj kwoty</div>
<div class="b" style="left:500.2px;top:208.5px;width:85px;height:17.6px;background:#fde8c8;border:1px solid #e9b199;border-radius:2px;box-sizing:border-box"></div>
<div class="t " style="left:504px;top:209.94px;font-size:9.4px;color:#222;letter-spacing:-0.3px;">BRUTTO</div>
<svg class="b" style="left:576px;top:216px" width="6" height="3.7" viewBox="0 0 6 3.7"><path d="M.5 .5L3.0 2.7L5.5 .5" fill="none" stroke="#333" stroke-width="1.1" stroke-linecap="round" stroke-linejoin="round"/></svg>
<div class="t " style="right:528.6px;top:230.74px;font-size:9.4px;color:#222;text-align:right;">Ilość</div>
<div class="b" style="left:500.2px;top:228.6px;width:85px;height:17.6px;background:#fde8c8;border:1px solid #e9b199;border-radius:2px;box-sizing:border-box"></div>
<div class="t " style="right:442.5px;top:230.34px;font-size:9.4px;color:#222;text-align:right;">1</div>
<div class="t " style="right:528.6px;top:251.14px;font-size:9.4px;color:#222;text-align:right;">Procent kosztów</div>
<div class="b" style="left:500.2px;top:249px;width:85px;height:17.8px;background:#fde8c8;border:1px solid #e9b199;border-radius:2px;box-sizing:border-box"></div>
<div class="t " style="right:454.6px;top:250.74px;font-size:9.4px;color:#222;text-align:right;">20</div>
<svg class="b" style="left:576px;top:256.6px" width="6" height="3.7" viewBox="0 0 6 3.7"><path d="M.5 .5L3.0 2.7L5.5 .5" fill="none" stroke="#333" stroke-width="1.1" stroke-linecap="round" stroke-linejoin="round"/></svg>
<div class="t " style="right:338.79999999999995px;top:169.74px;font-size:9.4px;color:#222;text-align:right;">Rodzaj</div>
<div class="b" style="left:690.5px;top:168px;width:84px;height:18px;background:#ececec;border:1px solid #e0e0e0;border-radius:2px;box-sizing:border-box"></div>
<div class="t " style="left:693.75px;top:169.34px;font-size:9.4px;color:#222;">UmowaZlecenie</div>
<div class="t " style="right:338.79999999999995px;top:190.34px;font-size:9.4px;color:#222;text-align:right;">Data płatności</div>
<div class="b" style="left:690.5px;top:190.2px;width:84px;height:15.2px;background:#fff;border:1px solid #cfcfcf;border-radius:2px;box-sizing:border-box"></div>
<div class="t " style="left:693.75px;top:190.34px;font-size:9.4px;color:#222;letter-spacing:-0.1px;">2018-06-11</div>
<svg class="b" style="left:763.6px;top:194.2px" width="8" height="8" viewBox="0 0 8 8"><rect x=".6" y="1.2" width="6.8" height="6.2" rx=".6" fill="none" stroke="#222" stroke-width="1.1"/><rect x=".6" y="1.2" width="6.8" height="1.6" fill="#222"/><path d="M2.2 0v1.6M5.8 0v1.6" stroke="#222" stroke-width="1"/><rect x="4.2" y="4.4" width="1.8" height="1.8" fill="#222"/></svg>
<div class="t " style="right:338.79999999999995px;top:210.34px;font-size:9.4px;color:#222;text-align:right;">Kwota/stawka</div>
<div class="b" style="left:690.5px;top:208.5px;width:84px;height:17.6px;background:#fff;border:1px solid #cfcfcf;border-radius:2px;box-sizing:border-box"></div>
<div class="t " style="right:252px;top:209.94px;font-size:9.4px;color:#222;text-align:right;">3 000.00</div>
<div class="t " style="right:338.79999999999995px;top:230.74px;font-size:9.4px;color:#222;text-align:right;">Termin</div>
<div class="b" style="left:690.5px;top:228.6px;width:84px;height:17.6px;background:#fff;border:1px solid #cfcfcf;border-radius:2px;box-sizing:border-box"></div>
<div class="t " style="right:265px;top:230.34px;font-size:9.4px;color:#222;text-align:right;">0</div>
<svg class="b" style="left:766.2px;top:236.2px" width="6" height="3.7" viewBox="0 0 6 3.7"><path d="M.5 .5L3.0 2.7L5.5 .5" fill="none" stroke="#333" stroke-width="1.1" stroke-linecap="round" stroke-linejoin="round"/></svg>
<div class="t " style="right:338.79999999999995px;top:251.14px;font-size:9.4px;color:#222;text-align:right;">Waluta</div>
<div class="b" style="left:690.5px;top:249px;width:84px;height:17.8px;background:#fff;border:1px solid #cfcfcf;border-radius:2px;box-sizing:border-box"></div>
<div class="t " style="left:693.75px;top:250.34px;font-size:9.4px;color:#222;">PLN</div>
<svg class="b" style="left:766.2px;top:256.6px" width="6" height="3.7" viewBox="0 0 6 3.7"><path d="M.5 .5L3.0 2.7L5.5 .5" fill="none" stroke="#333" stroke-width="1.1" stroke-linecap="round" stroke-linejoin="round"/></svg>
<div class="t " style="right:179.39999999999998px;top:170.34px;font-size:9.4px;color:#222;text-align:right;">Podtyp</div>
<div class="b" style="left:848.8px;top:168px;width:102.6px;height:18px;background:#ececec;border:1px solid #e0e0e0;border-radius:2px;box-sizing:border-box"></div>
<div class="t " style="right:179.39999999999998px;top:210.34px;font-size:9.4px;color:#222;text-align:right;">Typ stawki</div>
<div class="b" style="left:848.8px;top:208.5px;width:102.6px;height:17.6px;background:#fff;border:1px solid #cfcfcf;border-radius:2px;box-sizing:border-box"></div>
<div class="t " style="left:852px;top:209.94px;font-size:9.4px;color:#222;">Miesieczna</div>
<svg class="b" style="left:942.6px;top:216px" width="6" height="3.7" viewBox="0 0 6 3.7"><path d="M.5 .5L3.0 2.7L5.5 .5" fill="none" stroke="#333" stroke-width="1.1" stroke-linecap="round" stroke-linejoin="round"/></svg>
<div class="b" style="left:848px;top:253px;width:9.6px;height:9.6px;background:#fff;border:1px solid #bdbdbd;border-radius:1.5px;box-sizing:border-box;"></div>
<div class="t " style="left:863.8px;top:251.14px;font-size:9.4px;color:#222;">Ryczałtowy</div>
<div class="b" style="left:413.5px;top:274.6px;width:554px;height:1px;background:#e6e6e6"></div>
<div class="t " style="right:528.6px;top:282.74px;font-size:9.4px;color:#222;text-align:right;">Dział</div>
<div class="b" style="left:500.2px;top:280.6px;width:97.6px;height:18.2px;background:#fde8c8;border:1px solid #e9b199;border-radius:2px;box-sizing:border-box"></div>
<div class="t " style="left:504px;top:282.14px;font-size:9.4px;color:#222;">administracja</div>
<svg class="b" style="left:588.6px;top:288.6px" width="6" height="3.7" viewBox="0 0 6 3.7"><path d="M.5 .5L3.0 2.7L5.5 .5" fill="none" stroke="#333" stroke-width="1.1" stroke-linecap="round" stroke-linejoin="round"/></svg>
<div class="t " style="left:602.8px;top:282.14px;font-size:9.4px;color:#a0622d;">dział administracji</div>
<div class="t " style="right:528.6px;top:303.54px;font-size:9.4px;color:#222;text-align:right;">Grupa</div>
<div class="b" style="left:500.2px;top:301.3px;width:97.6px;height:18.2px;background:#fde8c8;border:1px solid #e9b199;border-radius:2px;box-sizing:border-box"></div>
<div class="t " style="left:504px;top:302.94px;font-size:9.4px;color:#222;">Zlec</div>
<svg class="b" style="left:588.6px;top:309.2px" width="6" height="3.7" viewBox="0 0 6 3.7"><path d="M.5 .5L3.0 2.7L5.5 .5" fill="none" stroke="#333" stroke-width="1.1" stroke-linecap="round" stroke-linejoin="round"/></svg>
<div class="t " style="left:602.8px;top:302.94px;font-size:9.4px;color:#a0622d;letter-spacing:-0.05px;">Grupa naliczeniowa dla funduszu bezosobowego (zlecenia)</div>
<div class="t " style="right:528.6px;top:324.14px;font-size:9.4px;color:#222;text-align:right;">Czynności</div>
<div class="b" style="left:500.2px;top:322px;width:85px;height:18px;background:#fff;border:1px solid #cfcfcf;border-radius:2px;box-sizing:border-box"></div>
<svg class="b" style="left:576px;top:329.8px" width="6" height="3.7" viewBox="0 0 6 3.7"><path d="M.5 .5L3.0 2.7L5.5 .5" fill="none" stroke="#333" stroke-width="1.1" stroke-linecap="round" stroke-linejoin="round"/></svg>
<div class="t " style="right:525.4px;top:340.34px;font-size:9.4px;color:#222;text-align:right;">Przedmiot</div>
<div class="b" style="left:499.5px;top:342.5px;width:451.7px;height:28px;background:#fff;border:1px solid #cfcfcf;border-radius:2px;box-sizing:border-box"></div>
<div class="t " style="right:528.6px;top:375.74px;font-size:9.4px;color:#222;text-align:right;">Uwagi</div>
<div class="b" style="left:500.2px;top:373.3px;width:451px;height:18px;background:#fff;border:1px solid #cfcfcf;border-radius:2px;box-sizing:border-box"></div>
<div class="t " style="right:528.6px;top:396.34px;font-size:9.4px;color:#222;text-align:right;">Praca od</div>
<div class="b" style="left:500.2px;top:395.4px;width:85px;height:15.8px;background:#fff;border:1px solid #cfcfcf;border-radius:2px;box-sizing:border-box"></div>
<div class="t " style="left:504px;top:396.14px;font-size:9.4px;color:#222;letter-spacing:-0.1px;">2018-06-01</div>
<svg class="b" style="left:574px;top:399.4px" width="8" height="8" viewBox="0 0 8 8"><rect x=".6" y="1.2" width="6.8" height="6.2" rx=".6" fill="none" stroke="#222" stroke-width="1.1"/><rect x=".6" y="1.2" width="6.8" height="1.6" fill="#222"/><path d="M2.2 0v1.6M5.8 0v1.6" stroke="#222" stroke-width="1"/><rect x="4.2" y="4.4" width="1.8" height="1.8" fill="#222"/></svg>
<div class="t " style="left:673.4px;top:396.34px;font-size:9.4px;color:#222;">do</div>
<div class="b" style="left:688.6px;top:395.4px;width:84.6px;height:15.8px;background:#fff;border:1px solid #cfcfcf;border-radius:2px;box-sizing:border-box"></div>
<div class="t " style="left:692px;top:396.14px;font-size:9.4px;color:#222;letter-spacing:-0.1px;">2018-06-30</div>
<svg class="b" style="left:762.6px;top:399.4px" width="8" height="8" viewBox="0 0 8 8"><rect x=".6" y="1.2" width="6.8" height="6.2" rx=".6" fill="none" stroke="#222" stroke-width="1.1"/><rect x=".6" y="1.2" width="6.8" height="1.6" fill="#222"/><path d="M2.2 0v1.6M5.8 0v1.6" stroke="#222" stroke-width="1"/><rect x="4.2" y="4.4" width="1.8" height="1.8" fill="#222"/></svg>
<div class="b" style="left:408.5px;top:421.3px;width:560.7px;height:46.89999999999998px;border:1px solid #e2e2e2;box-sizing:border-box;background:#fff"></div>
<div class="b" style="left:409.5px;top:422.3px;width:558.7px;height:9.6px;background:#f5f5f5;border-bottom:1px solid #b0b0b0"></div>
<div class="t " style="left:411.6px;top:420.04px;font-size:9.4px;color:#222;">Lista</div>
<div class="t " style="right:528.6px;top:445.34px;font-size:9.4px;color:#222;text-align:right;">Nr listy</div>
<div class="b" style="left:500.2px;top:443.3px;width:143.4px;height:18px;background:#fff;border:1px solid #cfcfcf;border-radius:2px;box-sizing:border-box"></div>
<div class="t " style="left:503.6px;top:444.74px;font-size:9.4px;color:#222;">Bezosobowa201806</div>
<svg class="b" style="left:634px;top:451px" width="6" height="3.7" viewBox="0 0 6 3.7"><path d="M.5 .5L3.0 2.7L5.5 .5" fill="none" stroke="#333" stroke-width="1.1" stroke-linecap="round" stroke-linejoin="round"/></svg>
<div class="t " style="left:671.3px;top:445.34px;font-size:9.4px;color:#222;">Wymuś sposób wypłaty</div>
<div class="b" style="left:773.8px;top:443.3px;width:71px;height:18px;background:#fff;border:1px solid #cfcfcf;border-radius:2px;box-sizing:border-box"></div>
<svg class="b" style="left:836px;top:451px" width="6" height="3.7" viewBox="0 0 6 3.7"><path d="M.5 .5L3.0 2.7L5.5 .5" fill="none" stroke="#333" stroke-width="1.1" stroke-linecap="round" stroke-linejoin="round"/></svg>
<div class="b" style="left:408.5px;top:472px;width:560.7px;height:148.20000000000005px;border:1px solid #e2e2e2;box-sizing:border-box;background:#fff"></div>
<div class="b" style="left:409.5px;top:473px;width:558.7px;height:9.6px;background:#f5f5f5;border-bottom:1px solid #b0b0b0"></div>
<div class="t " style="left:411.6px;top:470.74px;font-size:9.4px;color:#222;">Klasy</div>
<div class="b" style="left:428.5px;top:495.0px;width:9.5px;height:9.5px;background:#fff;border:1px solid #b4b4b4;border-radius:1.5px;box-sizing:border-box;"></div>
<svg class="b" style="left:428.5px;top:495.0px" width="9.5" height="9.5" viewBox="0 0 9.5 9.5"><path d="M2.1 4.9l1.9 1.9l3.5-3.9" fill="none" stroke="#2b6cb8" stroke-width="1.15" stroke-linecap="round" stroke-linejoin="round"/></svg>
<div class="t " style="left:444.1px;top:492.34px;font-size:9.4px;color:#222;">Podatek</div>
<div class="b" style="left:624px;top:491.2px;width:89.4px;height:17.4px;background:#fff;border:1px solid #2d7fc0;border-radius:2px;box-sizing:border-box"></div>
<div class="t " style="left:631.3px;top:492.94px;font-size:9.4px;color:#222;">Zaznacz wszystkie</div>
<div class="b" style="left:717.5px;top:491.2px;width:93.8px;height:17.4px;background:#fff;border:1px solid #cfcfcf;border-radius:2px;box-sizing:border-box"></div>
<div class="t " style="left:726.2px;top:492.94px;font-size:9.4px;color:#222;">Odznacz wszystkie</div>
<div class="b" style="left:413.5px;top:514.4px;width:554px;height:1px;background:#e6e6e6"></div>
<div class="b" style="left:428.5px;top:521.4px;width:9.5px;height:9.5px;background:#fff;border:1px solid #b4b4b4;border-radius:1.5px;box-sizing:border-box;"></div>
<svg class="b" style="left:428.5px;top:521.4px" width="9.5" height="9.5" viewBox="0 0 9.5 9.5"><path d="M2.1 4.9l1.9 1.9l3.5-3.9" fill="none" stroke="#2b6cb8" stroke-width="1.15" stroke-linecap="round" stroke-linejoin="round"/></svg>
<div class="t " style="left:444.1px;top:518.74px;font-size:9.4px;color:#222;">Składka emerytalna pracownika</div>
<div class="b" style="left:590.3px;top:521.4px;width:9.5px;height:9.5px;background:#fff;border:1px solid #b4b4b4;border-radius:1.5px;box-sizing:border-box;"></div>
<svg class="b" style="left:590.3px;top:521.4px" width="9.5" height="9.5" viewBox="0 0 9.5 9.5"><path d="M2.1 4.9l1.9 1.9l3.5-3.9" fill="none" stroke="#2b6cb8" stroke-width="1.15" stroke-linecap="round" stroke-linejoin="round"/></svg>
<div class="t " style="left:605.9px;top:518.74px;font-size:9.4px;color:#222;">Składka emerytalna płatnika</div>
<div class="b" style="left:428.5px;top:537.6px;width:9.5px;height:9.5px;background:#fff;border:1px solid #b4b4b4;border-radius:1.5px;box-sizing:border-box;"></div>
<svg class="b" style="left:428.5px;top:537.6px" width="9.5" height="9.5" viewBox="0 0 9.5 9.5"><path d="M2.1 4.9l1.9 1.9l3.5-3.9" fill="none" stroke="#2b6cb8" stroke-width="1.15" stroke-linecap="round" stroke-linejoin="round"/></svg>
<div class="t " style="left:444.1px;top:534.94px;font-size:9.4px;color:#222;">Składka rentowa pracownika</div>
<div class="b" style="left:590.3px;top:537.6px;width:9.5px;height:9.5px;background:#fff;border:1px solid #b4b4b4;border-radius:1.5px;box-sizing:border-box;"></div>
<svg class="b" style="left:590.3px;top:537.6px" width="9.5" height="9.5" viewBox="0 0 9.5 9.5"><path d="M2.1 4.9l1.9 1.9l3.5-3.9" fill="none" stroke="#2b6cb8" stroke-width="1.15" stroke-linecap="round" stroke-linejoin="round"/></svg>
<div class="t " style="left:605.9px;top:534.94px;font-size:9.4px;color:#222;">Składka rentowa płatnika</div>
<div class="b" style="left:413.5px;top:555px;width:554px;height:1px;background:#e6e6e6"></div>
<div class="b" style="left:428.5px;top:562.4px;width:9.5px;height:9.5px;background:#fff;border:1px solid #b4b4b4;border-radius:1.5px;box-sizing:border-box;"></div>
<svg class="b" style="left:428.5px;top:562.4px" width="9.5" height="9.5" viewBox="0 0 9.5 9.5"><path d="M2.1 4.9l1.9 1.9l3.5-3.9" fill="none" stroke="#2b6cb8" stroke-width="1.15" stroke-linecap="round" stroke-linejoin="round"/></svg>
<div class="t " style="left:444.1px;top:559.74px;font-size:9.4px;color:#222;">Składka chorobowa</div>
<div class="b" style="left:590.3px;top:562.4px;width:9.5px;height:9.5px;background:#fff;border:1px solid #b4b4b4;border-radius:1.5px;box-sizing:border-box;"></div>
<svg class="b" style="left:590.3px;top:562.4px" width="9.5" height="9.5" viewBox="0 0 9.5 9.5"><path d="M2.1 4.9l1.9 1.9l3.5-3.9" fill="none" stroke="#2b6cb8" stroke-width="1.15" stroke-linecap="round" stroke-linejoin="round"/></svg>
<div class="t " style="left:605.9px;top:559.74px;font-size:9.4px;color:#222;">Składka wypadkowa</div>
<div class="b" style="left:413.5px;top:581.2px;width:554px;height:1px;background:#e6e6e6"></div>
<div class="b" style="left:428.5px;top:588.0px;width:9.5px;height:9.5px;background:#fff;border:1px solid #b4b4b4;border-radius:1.5px;box-sizing:border-box;"></div>
<svg class="b" style="left:428.5px;top:588.0px" width="9.5" height="9.5" viewBox="0 0 9.5 9.5"><path d="M2.1 4.9l1.9 1.9l3.5-3.9" fill="none" stroke="#2b6cb8" stroke-width="1.15" stroke-linecap="round" stroke-linejoin="round"/></svg>
<div class="t " style="left:444.1px;top:585.34px;font-size:9.4px;color:#222;">Składka zdrowotna</div>
<div class="b" style="left:590.3px;top:588.0px;width:9.5px;height:9.5px;background:#fff;border:1px solid #b4b4b4;border-radius:1.5px;box-sizing:border-box;"></div>
<svg class="b" style="left:590.3px;top:588.0px" width="9.5" height="9.5" viewBox="0 0 9.5 9.5"><path d="M2.1 4.9l1.9 1.9l3.5-3.9" fill="none" stroke="#2b6cb8" stroke-width="1.15" stroke-linecap="round" stroke-linejoin="round"/></svg>
<div class="t " style="left:605.9px;top:585.34px;font-size:9.4px;color:#222;">Fundusz pracy</div>
<div class="b" style="left:428.5px;top:604.4px;width:9.5px;height:9.5px;background:#fff;border:1px solid #b4b4b4;border-radius:1.5px;box-sizing:border-box;"></div>
<svg class="b" style="left:428.5px;top:604.4px" width="9.5" height="9.5" viewBox="0 0 9.5 9.5"><path d="M2.1 4.9l1.9 1.9l3.5-3.9" fill="none" stroke="#2b6cb8" stroke-width="1.15" stroke-linecap="round" stroke-linejoin="round"/></svg>
<div class="t " style="left:444.1px;top:601.74px;font-size:9.4px;color:#222;">Składka zdrowotna pracownika</div>
<div class="b" style="left:590.3px;top:604.4px;width:9.5px;height:9.5px;background:#fff;border:1px solid #b4b4b4;border-radius:1.5px;box-sizing:border-box;"></div>
<svg class="b" style="left:590.3px;top:604.4px" width="9.5" height="9.5" viewBox="0 0 9.5 9.5"><path d="M2.1 4.9l1.9 1.9l3.5-3.9" fill="none" stroke="#2b6cb8" stroke-width="1.15" stroke-linecap="round" stroke-linejoin="round"/></svg>
<div class="t " style="left:605.9px;top:601.74px;font-size:9.4px;color:#222;">F.G.Ś.P.</div>
<div class="b" style="left:751.4px;top:604.4px;width:9.5px;height:9.5px;background:#fff;border:1px solid #b4b4b4;border-radius:1.5px;box-sizing:border-box;"></div>
<svg class="b" style="left:751.4px;top:604.4px" width="9.5" height="9.5" viewBox="0 0 9.5 9.5"><path d="M2.1 4.9l1.9 1.9l3.5-3.9" fill="none" stroke="#2b6cb8" stroke-width="1.15" stroke-linecap="round" stroke-linejoin="round"/></svg>
<div class="t " style="left:767.0px;top:601.74px;font-size:9.4px;color:#222;">Składka FEP</div>
<div class="b" style="left:408.5px;top:635.3px;width:113.4px;height:23px;background:#fff;border:1px solid #cfcfcf;border-radius:2px;box-sizing:border-box"></div>
<svg class="b" style="left:436.6px;top:640px" width="14" height="14" viewBox="0 0 14 14"><defs><radialGradient id="gg" cx=".4" cy=".38" r=".62"><stop offset="0" stop-color="#2fd453"/><stop offset=".6" stop-color="#1cb63a"/><stop offset="1" stop-color="#0b7f22"/></radialGradient></defs><path d="M7 .3l1.500 1.100 1.900-.400.700 1.800 1.800.700-.400 1.900L13.600 7l-1.100 1.600.400 1.900-1.800.700-.700 1.800-1.900-.400L7 13.700l-1.500-1.100-1.900.400-.700-1.800-1.800-.700.400-1.900L.4 7l1.100-1.600-.400-1.900 1.800-.700.700-1.800 1.900.400z" fill="url(#gg)" stroke="#0a7a20" stroke-width=".7"/><path d="M3.600 5.600l1.600-1.800 1.400-.300" fill="none" stroke="#a8f2b8" stroke-width="1.100" stroke-linecap="round"/><ellipse cx="7.600" cy="7.800" rx="1.700" ry="1.500" fill="#0b6a1e"/><circle cx="4.200" cy="8.800" r=".8" fill="#0f8a2a"/></svg>
<div class="t " style="left:453.6px;top:640.14px;font-size:9.4px;color:#222;">Zatwierdź</div>
<div class="b" style="left:856.3px;top:635.3px;width:112.7px;height:23px;background:#fff;border:1px solid #cfcfcf;border-radius:2px;box-sizing:border-box"></div>
<svg class="b" style="left:894px;top:639.6px" width="14" height="15" viewBox="0 0 14 15"><defs><linearGradient id="rg" x1="0" y1="0" x2=".6" y2="1"><stop offset="0" stop-color="#ff6a2a"/><stop offset=".5" stop-color="#f23a12"/><stop offset="1" stop-color="#dc1c10"/></linearGradient></defs><path d="M3.600 .8h5.600l-1 1H4.200L1.400 6.600l2.400 5.200 1.600 1.600-1.400.600L2.600 12.600 0 6.800z" fill="#d8141f"/><path d="M5 1.400h5.400l2.800 4.800-2.600 6.400H5.600L2.400 6.800z" fill="url(#rg)"/><path d="M5.400 7.200c.9-1.500 1.700-1.300 2.400-.5.700.8 1.300.5 2.100-.900-.3 2.200-1.300 2.900-2.300 2.100-.8-.7-1.400-.8-2.200-.700z" fill="#fff"/></svg>
<div class="t " style="left:910px;top:640.14px;font-size:9.4px;color:#222;">Wróć</div>
<svg class="b" style="left:401px;top:694.7px" width="14" height="13" viewBox="0 0 14 13"><rect x=".5" y=".5" width="12.800" height="12" fill="#fff" stroke="#8a8a8a" stroke-width=".9"/><rect x=".1" y=".1" width="13.600" height="2.200" fill="#2f6fc4"/><circle cx="6.900" cy="7.400" r="2.100" fill="none" stroke="#555" stroke-width="1.400"/><path d="M6.900 4v1.200M6.900 9.600v1.200M3.500 7.400h1.200M9.100 7.400h1.200M4.500 5l.8.800M8.500 9l.8.800M9.300 5l-.8.800M5.300 9l-.8.800" stroke="#555" stroke-width="1"/></svg>
<svg class="b" style="left:423px;top:700px" width="6.6" height="3.8" viewBox="0 0 6.6 3.8"><path d="M.5 .5L3.3 2.8L6.1 .5" fill="none" stroke="#3e68a8" stroke-width="1.1" stroke-linecap="round" stroke-linejoin="round"/></svg>
</div></body></html>
